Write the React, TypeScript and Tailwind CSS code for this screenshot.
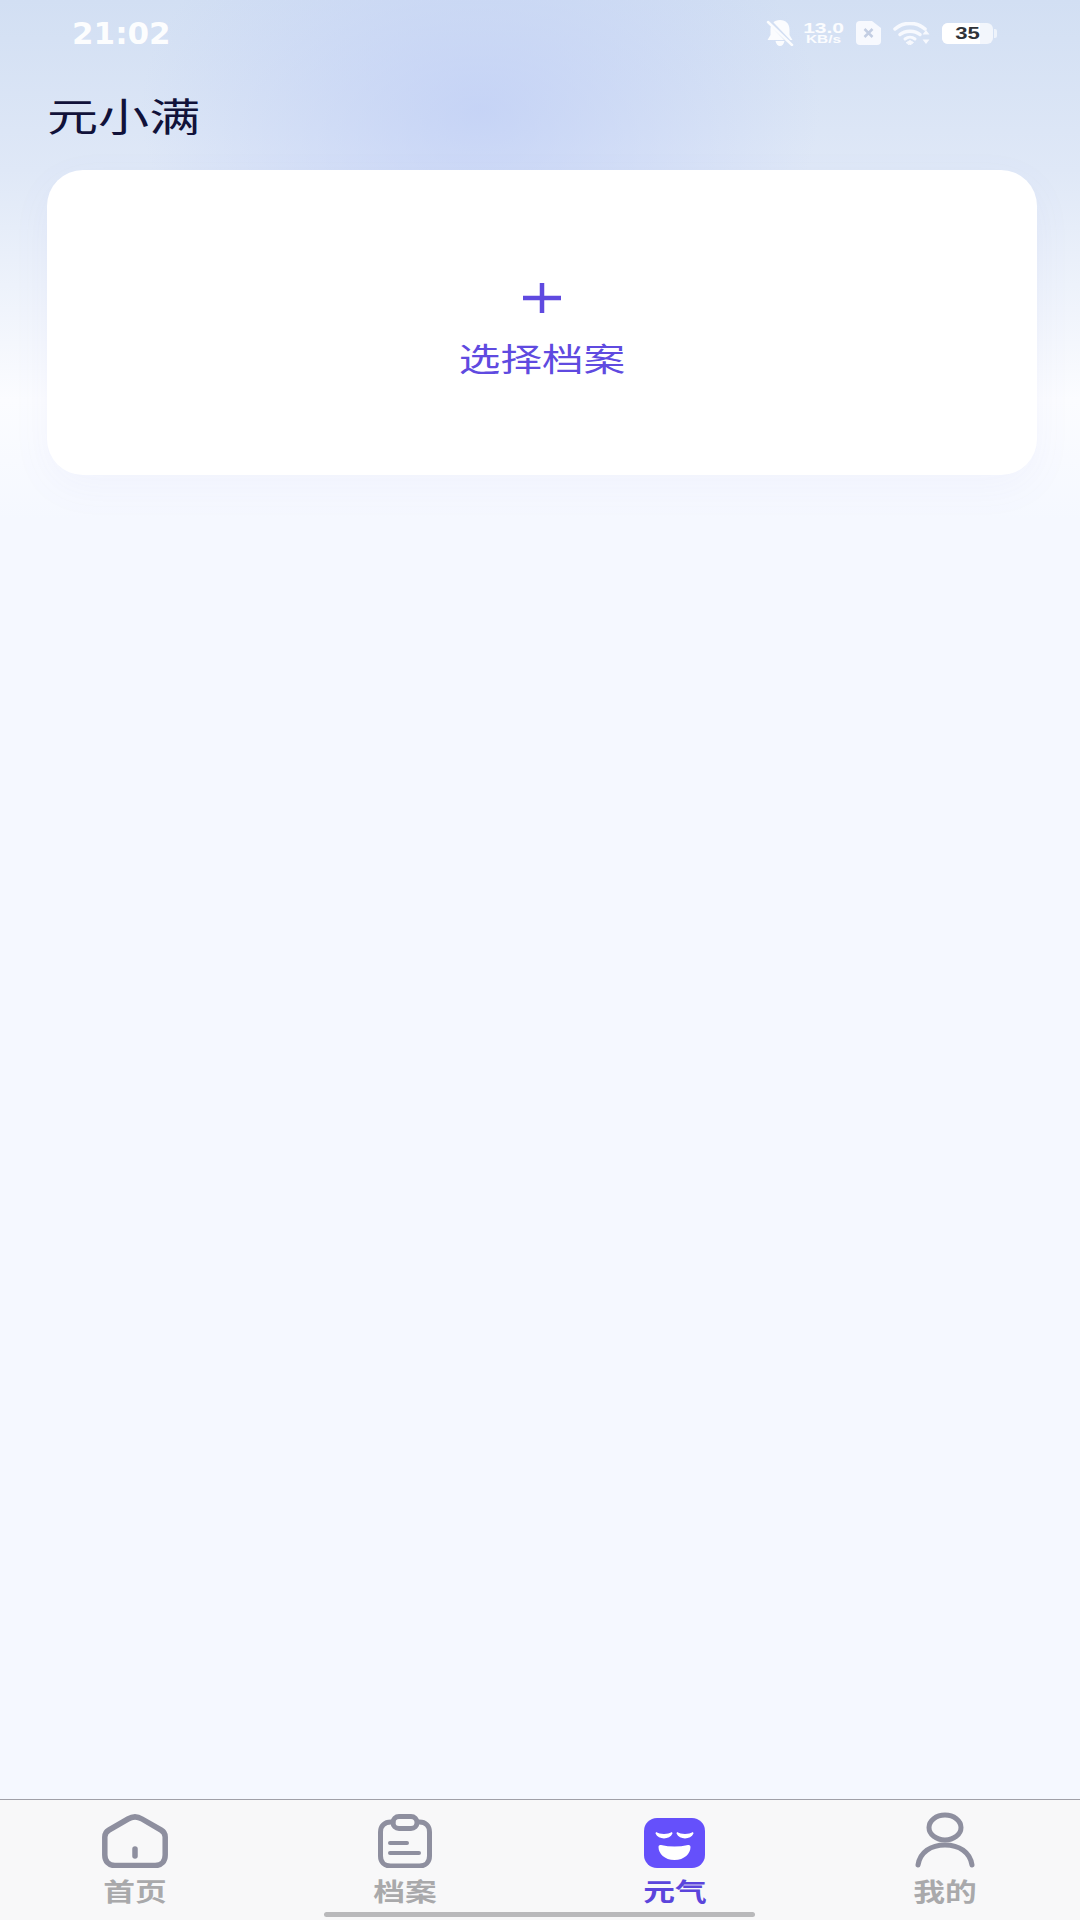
const CJK = "font-['Noto_Sans_CJK_SC','Noto_Sans',sans-serif]";

function BellOff() {
  return (
    <svg width="28" height="26" viewBox="0 0 28 26" className="text-white/90">
      <path
        d="M14 0c6 0 9.500 4 9.500 9.500v5.500l3 5H1.500l3-5V9.500C4.500 4 8 0 14 0zM9.500 21h9c-.5 3-2.500 5-4.500 5s-4-2-4.500-5z"
        fill="currentColor"
      />
      <path d="M3 1l23 24" stroke="#d3dff3" strokeWidth="4.500" />
      <path d="M2 2l24 23" stroke="currentColor" strokeWidth="2.500" strokeLinecap="round" />
    </svg>
  );
}

function SimX() {
  return (
    <svg width="25" height="24" viewBox="0 0 25 24">
      <path
        d="M4 0h12l9 7v13a4 4 0 0 1-4 4H4a4 4 0 0 1-4-4V4a4 4 0 0 1 4-4z"
        fill="#f7f9fe"
      />
      <path d="M8.500 8l8 8M16.500 8l-8 8" stroke="#c3cee3" strokeWidth="2.500" />
    </svg>
  );
}

function Wifi() {
  return (
    <svg width="38" height="23" viewBox="0 0 38 23" fill="none" stroke="#f7f9fe" strokeLinecap="round">
      <path d="M2 7c8-7.500 22-7.500 30 0" strokeWidth="3.500" />
      <path d="M7 12.500c5-4.500 15-4.500 20 0" strokeWidth="3.500" />
      <path d="M12 17c3-2.500 7-2.500 10 0" strokeWidth="3" />
      <path d="M13.500 20.500l3.500-2 3.500 2-3.500 2.500z" fill="#f7f9fe" strokeWidth="1" />
      <path d="M33 8l3.500 4.500h-7zM33 22l-3.500-4.500h7z" fill="#f7f9fe" stroke="none" />
    </svg>
  );
}

function HomeIcon() {
  return (
    <svg width="66" height="54" viewBox="0 0 66 54" fill="none" stroke="#8e8f9f" strokeWidth="5.500" strokeLinecap="round">
      <path d="M7 16 26 5c4.500-2.700 9.500-2.700 14 0l19 11c3 1.700 4.200 4 4.200 7v18c0 6.500-4 10.500-10 10.500H12.800c-6 0-10-4-10-10.500V23c0-3 1.200-5.300 4.200-7z" />
      <path d="M33 35v7" />
    </svg>
  );
}

function ArchiveIcon() {
  return (
    <svg width="54" height="54" viewBox="0 0 54 54" fill="none" stroke="#8e8f9f" strokeWidth="5" strokeLinecap="round">
      <path d="M15 8h-2C6.500 8 2.500 12 2.500 18v24c0 6 4 10 10 10h29c6 0 10-4 10-10V18c0-6-4-10-10-10h-2" />
      <rect x="15" y="2.500" width="24" height="12" rx="6" />
      <path d="M12 29h17M12 39h29" strokeWidth="4" />
    </svg>
  );
}

function MoodIcon() {
  return (
    <svg width="62" height="50" viewBox="0 0 62 50">
      <rect width="61" height="50" rx="13" fill="#6550fb" />
      <path d="M12 14c4 2.500 12 2.500 16 0l.5 1.500c-3 6.500-14 6.500-17 0zM33 14c4 2.500 12 2.500 16 0l.5 1.500c-3 6.500-14 6.500-17 0z" fill="#fff" />
      <path d="M17 27c9 2 18 2 27 0 1.500-.3 2.500.5 2.500 2 0 6.500-6 13-16 13s-16-6.500-16-13c0-1.500 1-2.300 2.500-2z" fill="#fff" />
    </svg>
  );
}

function UserIcon() {
  return (
    <svg width="60" height="56" viewBox="0 0 60 56" fill="none" stroke="#8e8f9f" strokeWidth="5" strokeLinecap="round">
      <ellipse cx="30" cy="15.500" rx="16" ry="12.500" />
      <path d="M3 53c2-13 13-20 27-20s25 7 27 20" />
    </svg>
  );
}

const tabs = [
  { label: "首页", icon: <HomeIcon />, active: false },
  { label: "档案", icon: <ArchiveIcon />, active: false },
  { label: "元气", icon: <MoodIcon />, active: true },
  { label: "我的", icon: <UserIcon />, active: false },
];

export default function App() {
  return (
    <div className="relative flex h-[1920px] w-[1080px] flex-col overflow-hidden bg-[radial-gradient(ellipse_340px_230px_at_480px_110px,rgba(190,205,246,0.72),rgba(190,205,246,0)),linear-gradient(180deg,#d2dff3_0px,#dfe8f7_170px,#fbfcff_400px,#f5f8ff_520px)]">
      {/* Status bar */}
      <div className="flex h-[66px] items-center justify-between pl-[72px] pr-[87px]">
        <span className="font-['DejaVu_Sans',sans-serif] text-[31px] font-bold leading-none text-white/95">
          21:02
        </span>
        <div className="flex items-center">
          <BellOff />
          <div className="ml-[10px] flex w-[40px] flex-col items-center font-['Liberation_Sans',sans-serif] font-bold leading-none text-white/90">
            <span className="scale-x-[1.4] text-[15px] leading-[13px]">13.0</span>
            <span className="scale-x-[1.4] text-[11px] leading-[11px]">KB/s</span>
          </div>
          <div className="ml-[12px]">
            <SimX />
          </div>
          <div className="ml-[12px]">
            <Wifi />
          </div>
          <div className="relative ml-[11px] flex h-[21px] w-[51px] items-center justify-center rounded-[6px] bg-white/70">
            <div className="absolute inset-y-0 left-0 w-[38px] rounded-l-[6px] bg-white" />
            <span className="relative scale-x-[1.3] font-['Liberation_Sans',sans-serif] text-[17px] font-bold leading-none text-[#303338]">
              35
            </span>
            <div className="absolute right-[-4px] h-[9px] w-[3px] rounded-r-[2px] bg-white/60" />
          </div>
        </div>
      </div>

      {/* Title */}
      <div className="flex h-[104px] items-center pb-[7px] pl-[47px]">
        <span className={`${CJK} origin-left scale-x-[1.31] text-[39px] leading-none text-[#11123a]`}>
          元小满
        </span>
      </div>

      {/* Archive picker */}
      <div className="ml-[47px] mr-[43px] flex h-[305px] flex-col items-center rounded-[36px] bg-white pt-[113px] shadow-[0_12px_40px_rgba(110,120,220,0.05)]">
        <svg width="38" height="30" viewBox="0 0 38 30">
          <path d="M0 15h38M19 0v30" stroke="#5f4ae0" strokeWidth="4.500" />
        </svg>
        <span className={`${CJK} mt-[25px] scale-x-[1.3] text-[32px] leading-[38px] text-[#5f4ae0]`}>
          选择档案
        </span>
      </div>

      <div className="flex-1" />

      {/* Tab bar */}
      <div className="grid h-[121px] grid-cols-4 border-t-[1.500px] border-[#a0a0a8] bg-[#f8f8f9]">
        {tabs.map((tab) => (
          <div key={tab.label} className="flex flex-col items-center">
            <div className="flex h-[68px] items-end">{tab.icon}</div>
            <span
              className={`${CJK} mt-[9px] scale-x-[1.27] text-[25px] font-bold leading-[27px] ${
                tab.active ? "text-[#5b45dc]" : "text-[#a9a9ab]"
              }`}
            >
              {tab.label}
            </span>
          </div>
        ))}
      </div>

      {/* Home indicator */}
      <div className="absolute bottom-[3px] left-[324px] h-[5px] w-[431px] rounded-full bg-[#b9b9bb]" />
    </div>
  );
}
